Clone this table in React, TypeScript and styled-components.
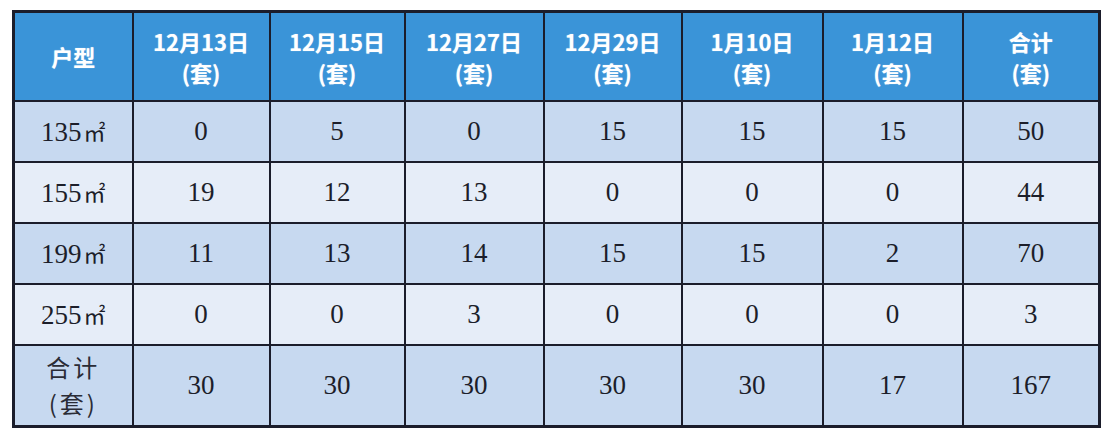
import React from "react";
import styled, { createGlobalStyle } from "styled-components";

const GlobalStyle = createGlobalStyle`
  html, body {
    margin: 0;
    padding: 0;
    background: #ffffff;
  }
`;

const Page = styled.div`
  padding: 10px 0 0 12px;
  width: 1108px;
  height: 434px;
  box-sizing: border-box;
`;

const Table = styled.table`
  width: 1086px;
  table-layout: fixed;
  border-collapse: collapse;
  border: 3px solid #1b1d2b;
`;

const HeadCell = styled.th`
  height: 87px;
  padding: 0;
  background: #3a94d8;
  border: 2px solid #1b1d2b;
  color: #ffffff;
  font-family: "Noto Sans CJK SC", "Noto Sans", sans-serif;
  font-weight: 700;
  font-size: 22px;
  line-height: 31px;
  text-align: center;
  vertical-align: middle;
  text-shadow: 0 0 1px rgba(255, 255, 255, 0.6);
`;

const Row = styled.tr<{ $shade: boolean; $tall?: boolean }>`
  height: ${(p) => (p.$tall ? "81px" : "61px")};
  background: ${(p) => (p.$shade ? "#c7d9f0" : "#e6edf8")};
`;

const Cell = styled.td`
  padding: 0;
  border: 2px solid #1b1d2b;
  color: #1c1e2a;
  font-family: "Liberation Serif", "Noto Sans CJK SC", serif;
  font-size: 27px;
  text-align: center;
  vertical-align: middle;
`;

const Unit = styled.span`
  font-family: "Noto Sans CJK SC", sans-serif;
  font-size: 22px;
  margin-left: 2px;
`;

const TotalLabel = styled.div`
  font-family: "Noto Sans CJK SC", serif;
  font-size: 24px;
  line-height: 36px;
  letter-spacing: 3px;
  color: #2a2c36;
`;

const widths = [119, 137, 135, 139, 138, 141, 140, 137];

const headers: [string, string][] = [
  ["12月13日", "(套)"],
  ["12月15日", "(套)"],
  ["12月27日", "(套)"],
  ["12月29日", "(套)"],
  ["1月10日", "(套)"],
  ["1月12日", "(套)"],
  ["合计", "(套)"],
];

const rows: { area: string; values: number[] }[] = [
  { area: "135", values: [0, 5, 0, 15, 15, 15, 50] },
  { area: "155", values: [19, 12, 13, 0, 0, 0, 44] },
  { area: "199", values: [11, 13, 14, 15, 15, 2, 70] },
  { area: "255", values: [0, 0, 3, 0, 0, 0, 3] },
];

const totals = [30, 30, 30, 30, 30, 17, 167];

const App = () => {
  return (
    <Page>
      <GlobalStyle />
      <Table>
        <colgroup>
          {widths.map((w, i) => (
            <col key={i} style={{ width: w }} />
          ))}
        </colgroup>
        <thead>
          <tr>
            <HeadCell>户型</HeadCell>
            {headers.map(([top, bottom]) => (
              <HeadCell key={top}>
                {top}
                <br />
                {bottom}
              </HeadCell>
            ))}
          </tr>
        </thead>
        <tbody>
          {rows.map((row, i) => (
            <Row key={row.area} $shade={i % 2 === 0}>
              <Cell>
                {row.area}
                <Unit>㎡</Unit>
              </Cell>
              {row.values.map((v, j) => (
                <Cell key={j}>{v}</Cell>
              ))}
            </Row>
          ))}
          <Row $shade $tall>
            <Cell>
              <TotalLabel>
                合计
                <br />
                (套)
              </TotalLabel>
            </Cell>
            {totals.map((v, j) => (
              <Cell key={j}>{v}</Cell>
            ))}
          </Row>
        </tbody>
      </Table>
    </Page>
  );
};

export default App;
